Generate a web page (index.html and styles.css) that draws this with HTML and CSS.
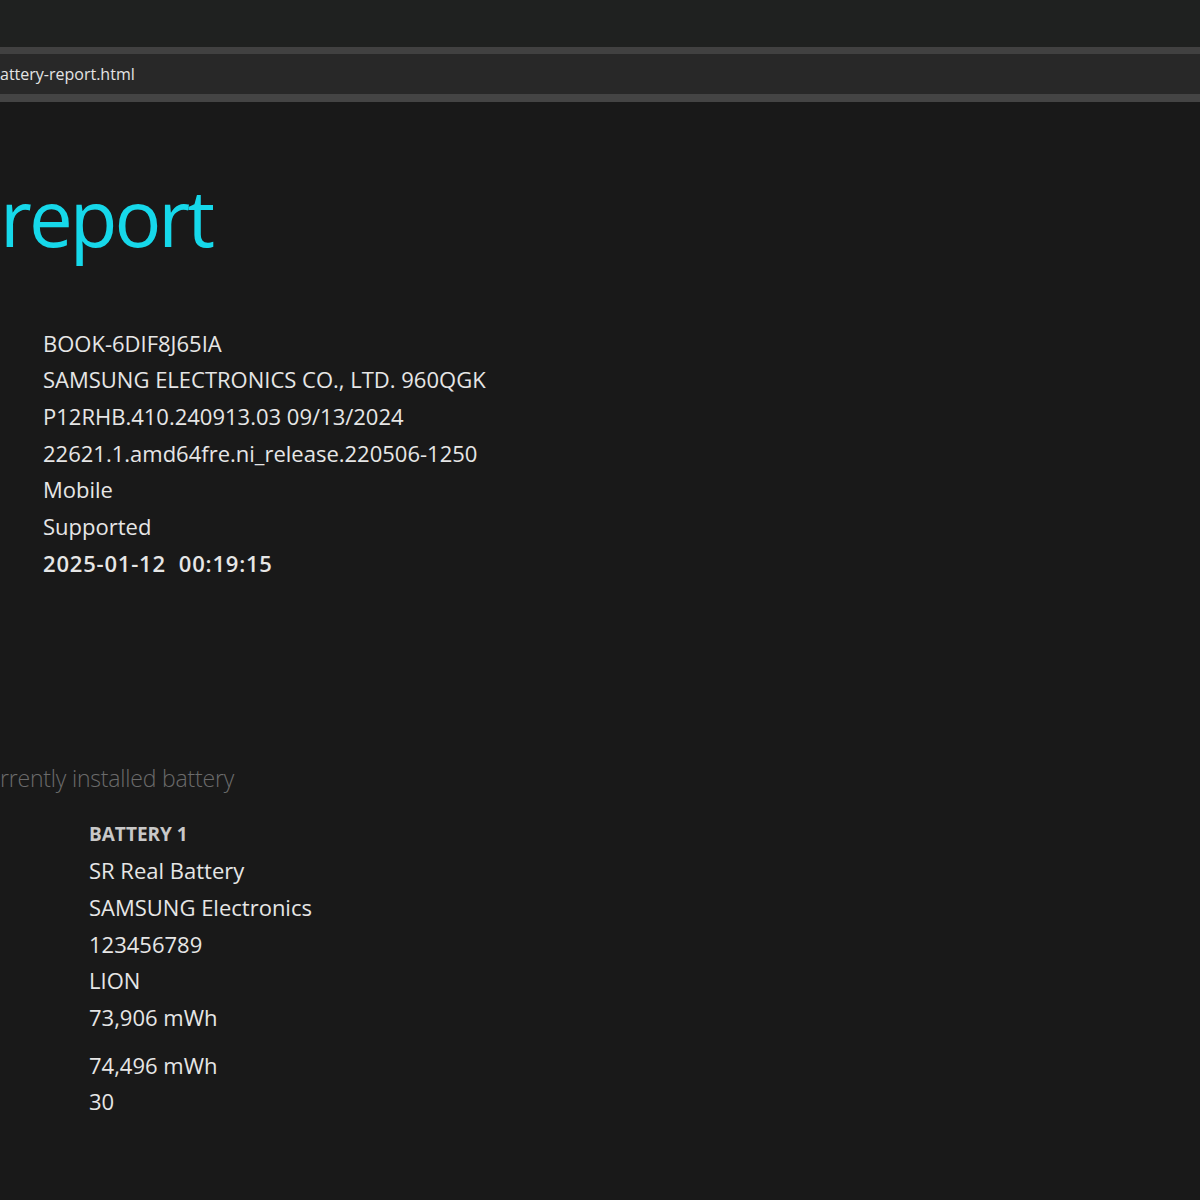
FILE: index.html
```html
<!DOCTYPE html>
<html>
<head>
<meta charset="utf-8">
<link rel="stylesheet" href="styles.css">
</head>
<body>
<div class="chrome-top"></div>
<div class="addr-border"></div>
<div class="addr-bar"><span class="addr-text">attery-report.html</span></div>
<div class="addr-border bottom"></div>
<main class="page">
  <h1 class="title">report</h1>
  <div class="info">
    <div class="row">BOOK-6DIF8J65IA</div>
    <div class="row">SAMSUNG ELECTRONICS CO., LTD. 960QGK</div>
    <div class="row">P12RHB.410.240913.03 09/13/2024</div>
    <div class="row">22621.1.amd64fre.ni_release.220506-1250</div>
    <div class="row">Mobile</div>
    <div class="row">Supported</div>
    <div class="row strong">2025-01-12&nbsp; 00:19:15</div>
  </div>
  <div class="section-desc">rrently installed battery</div>
  <div class="battery">
    <div class="bat-label">BATTERY 1</div>
    <div class="row">SR Real Battery</div>
    <div class="row">SAMSUNG Electronics</div>
    <div class="row">123456789</div>
    <div class="row">LION</div>
    <div class="row gap-after">73,906 mWh</div>
    <div class="row">74,496 mWh</div>
    <div class="row">30</div>
  </div>
</main>
</body>
</html>
```
FILE: styles.css
```css
html, body {
  margin: 0;
  padding: 0;
  background: #191919;
  overflow: hidden;
}
body {
  width: 1200px;
  height: 1200px;
  font-family: "Open Sans", "Noto Sans", sans-serif;
  color: #e6e6e6;
}
.chrome-top {
  height: 47px;
  background: #1f2120;
}
.addr-border {
  height: 7px;
  background: #414141;
}
.addr-border.bottom {
  height: 8px;
  background: #444444;
}
.addr-bar {
  height: 40px;
  background: #282828;
  display: flex;
  align-items: center;
}
.addr-text {
  font-size: 16px;
  color: #e4e4e4;
}
.page {
  display: flex;
  flex-direction: column;
}
.title {
  margin: 65px 0 0 0;
  font-weight: 400;
  font-size: 78px;
  line-height: 100px;
  height: 100px;
  color: #16d8ea;
  letter-spacing: -3px;
  white-space: nowrap;
}
.info {
  margin-top: 57.7px;
  padding-left: 43px;
  display: flex;
  flex-direction: column;
}
.row {
  font-size: 22px;
  line-height: 36.67px;
  height: 36.67px;
  white-space: nowrap;
}
.row.strong {
  font-weight: 600;
  letter-spacing: 0.8px;
}
.section-desc {
  margin-top: 179px;
  font-size: 23px;
  line-height: 36px;
  color: #6b6b6b;
  font-weight: 300;
  letter-spacing: -0.2px;
}
.battery {
  margin-top: 21px;
  padding-left: 89px;
  display: flex;
  flex-direction: column;
}
.bat-label {
  font-size: 19px;
  font-weight: 700;
  line-height: 35px;
  height: 35px;
  color: #c8c8c8;
}
.row.gap-after {
  margin-bottom: 11px;
}
```
